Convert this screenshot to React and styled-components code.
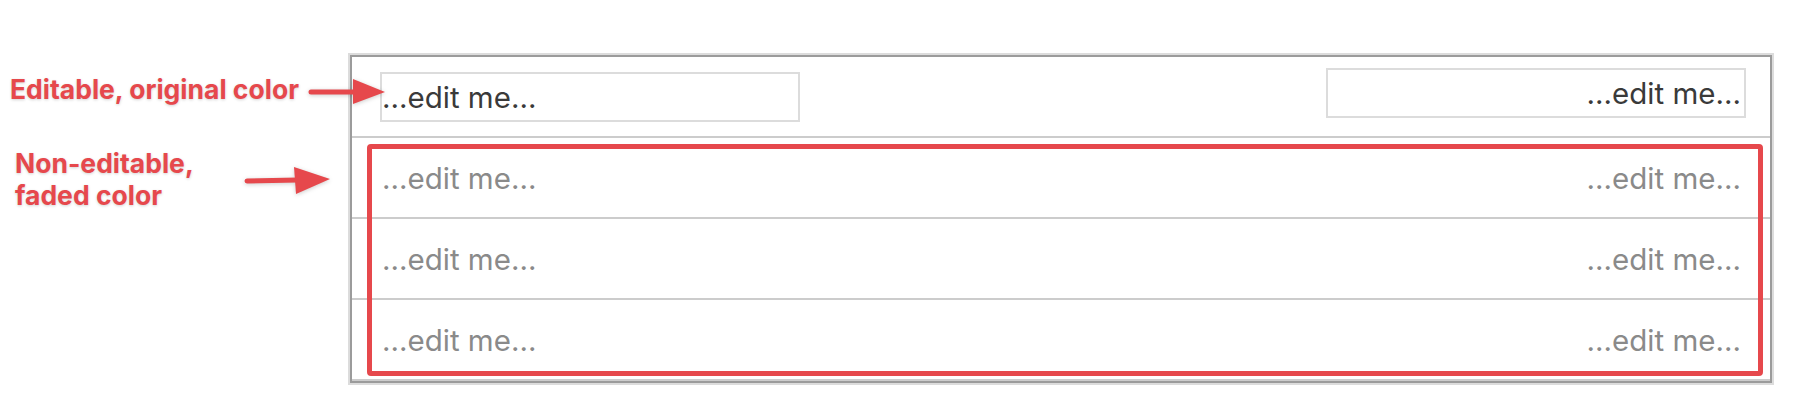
import React from 'react';
import styled, { createGlobalStyle } from 'styled-components';

const RED = '#e6484c';

const GlobalStyle = createGlobalStyle`
  html, body {
    margin: 0;
    background: #ffffff;
  }
  body {
    font-family: Inter, "Noto Sans", sans-serif;
  }
`;

const Canvas = styled.div`
  position: relative;
  display: flex;
  align-items: flex-start;
  width: 1816px;
  height: 420px;
  padding-top: 55px;
  box-sizing: border-box;
`;

const Notes = styled.div`
  display: flex;
  flex-direction: column;
  gap: 42px;
  width: 350px;
  flex-shrink: 0;
  padding-top: 18px;
  box-sizing: border-box;
`;

const Note = styled.div`
  padding-left: ${props => props.$indent}px;
  font-family: Inter, "Liberation Sans", sans-serif;
  font-weight: 700;
  font-size: 26.5px;
  line-height: 32px;
  color: ${RED};
  text-shadow: 0 1px 3px rgba(0, 0, 0, 0.18);
`;

const Arrow = styled.svg`
  position: absolute;
  left: ${props => props.$left}px;
  top: ${props => props.$top}px;
  overflow: visible;
  filter: drop-shadow(0 1px 2px rgba(0, 0, 0, 0.2));
`;

const Table = styled.div`
  position: relative;
  box-sizing: border-box;
  width: 1422px;
  flex-shrink: 0;
  border: 2px solid #9b9b9b;
  box-shadow: 0 0 0 2px #dcdcdc;
  background: #fff;
`;

const Row = styled.div`
  display: flex;
  align-items: center;
  justify-content: space-between;
  height: 79px;
  padding: 0 24px 0 28px;
  border-bottom: 2px solid #cccccc;

  &:last-child {
    border-bottom: none;
    height: 80px;
  }
`;

const Field = styled.div`
  box-sizing: border-box;
  width: 420px;
  height: 50px;
  display: flex;
  align-items: center;
  justify-content: ${props => (props.$right ? 'flex-end' : 'flex-start')};
  padding: 1px 3px 0 0;
  margin-bottom: ${props => props.$raise * 2}px;
  border: 2px solid ${props => (props.$editable ? '#dcdcdc' : 'transparent')};
  font-family: Inter, "Noto Sans", sans-serif;
  font-size: 29.5px;
  color: ${props => (props.$editable ? '#3a3a3a' : '#8a8a8a')};
`;

const Highlight = styled.div`
  position: absolute;
  left: 15px;
  top: 87px;
  width: 1396px;
  height: 232px;
  box-sizing: border-box;
  border: 5px solid ${RED};
  border-radius: 4px;
  pointer-events: none;
`;

const rows = [
  { editable: true },
  { editable: false },
  { editable: false },
  { editable: false },
];

function ArrowShape({ left, top, width, height, tail, base, tip, headTop, headBottom }) {
  return (
    <Arrow $left={left} $top={top} width={width} height={height} viewBox={`0 0 ${width} ${height}`}>
      <line x1={tail[0]} y1={tail[1]} x2={base[0]} y2={base[1]} stroke={RED} strokeWidth="5" strokeLinecap="round" />
      <polygon points={`${headTop[0]},${headTop[1]} ${tip[0]},${tip[1]} ${headBottom[0]},${headBottom[1]}`} fill={RED} />
    </Arrow>
  );
}

export default function App() {
  return (
    <>
      <GlobalStyle />
      <Canvas>
        <Notes>
          <Note $indent={10}>Editable, original color</Note>
          <Note $indent={15}>
            Non-editable,
            <br />
            faded color
          </Note>
        </Notes>

        <Table>
          {rows.map((row, i) => (
            <Row key={i}>
              <Field $editable={row.editable} $raise={0}>...edit me...</Field>
              <Field $editable={row.editable} $right $raise={row.editable ? 4 : 0}>...edit me...</Field>
            </Row>
          ))}
          <Highlight />
        </Table>

        <ArrowShape
          left={308}
          top={76}
          width={80}
          height={32}
          tail={[3, 16]}
          base={[48, 16]}
          tip={[77, 16]}
          headTop={[45, 3]}
          headBottom={[45, 28]}
        />
        <ArrowShape
          left={244}
          top={163}
          width={90}
          height={34}
          tail={[3, 18]}
          base={[54, 17]}
          tip={[86, 16]}
          headTop={[50, 4]}
          headBottom={[52, 31]}
        />
      </Canvas>
    </>
  );
}
